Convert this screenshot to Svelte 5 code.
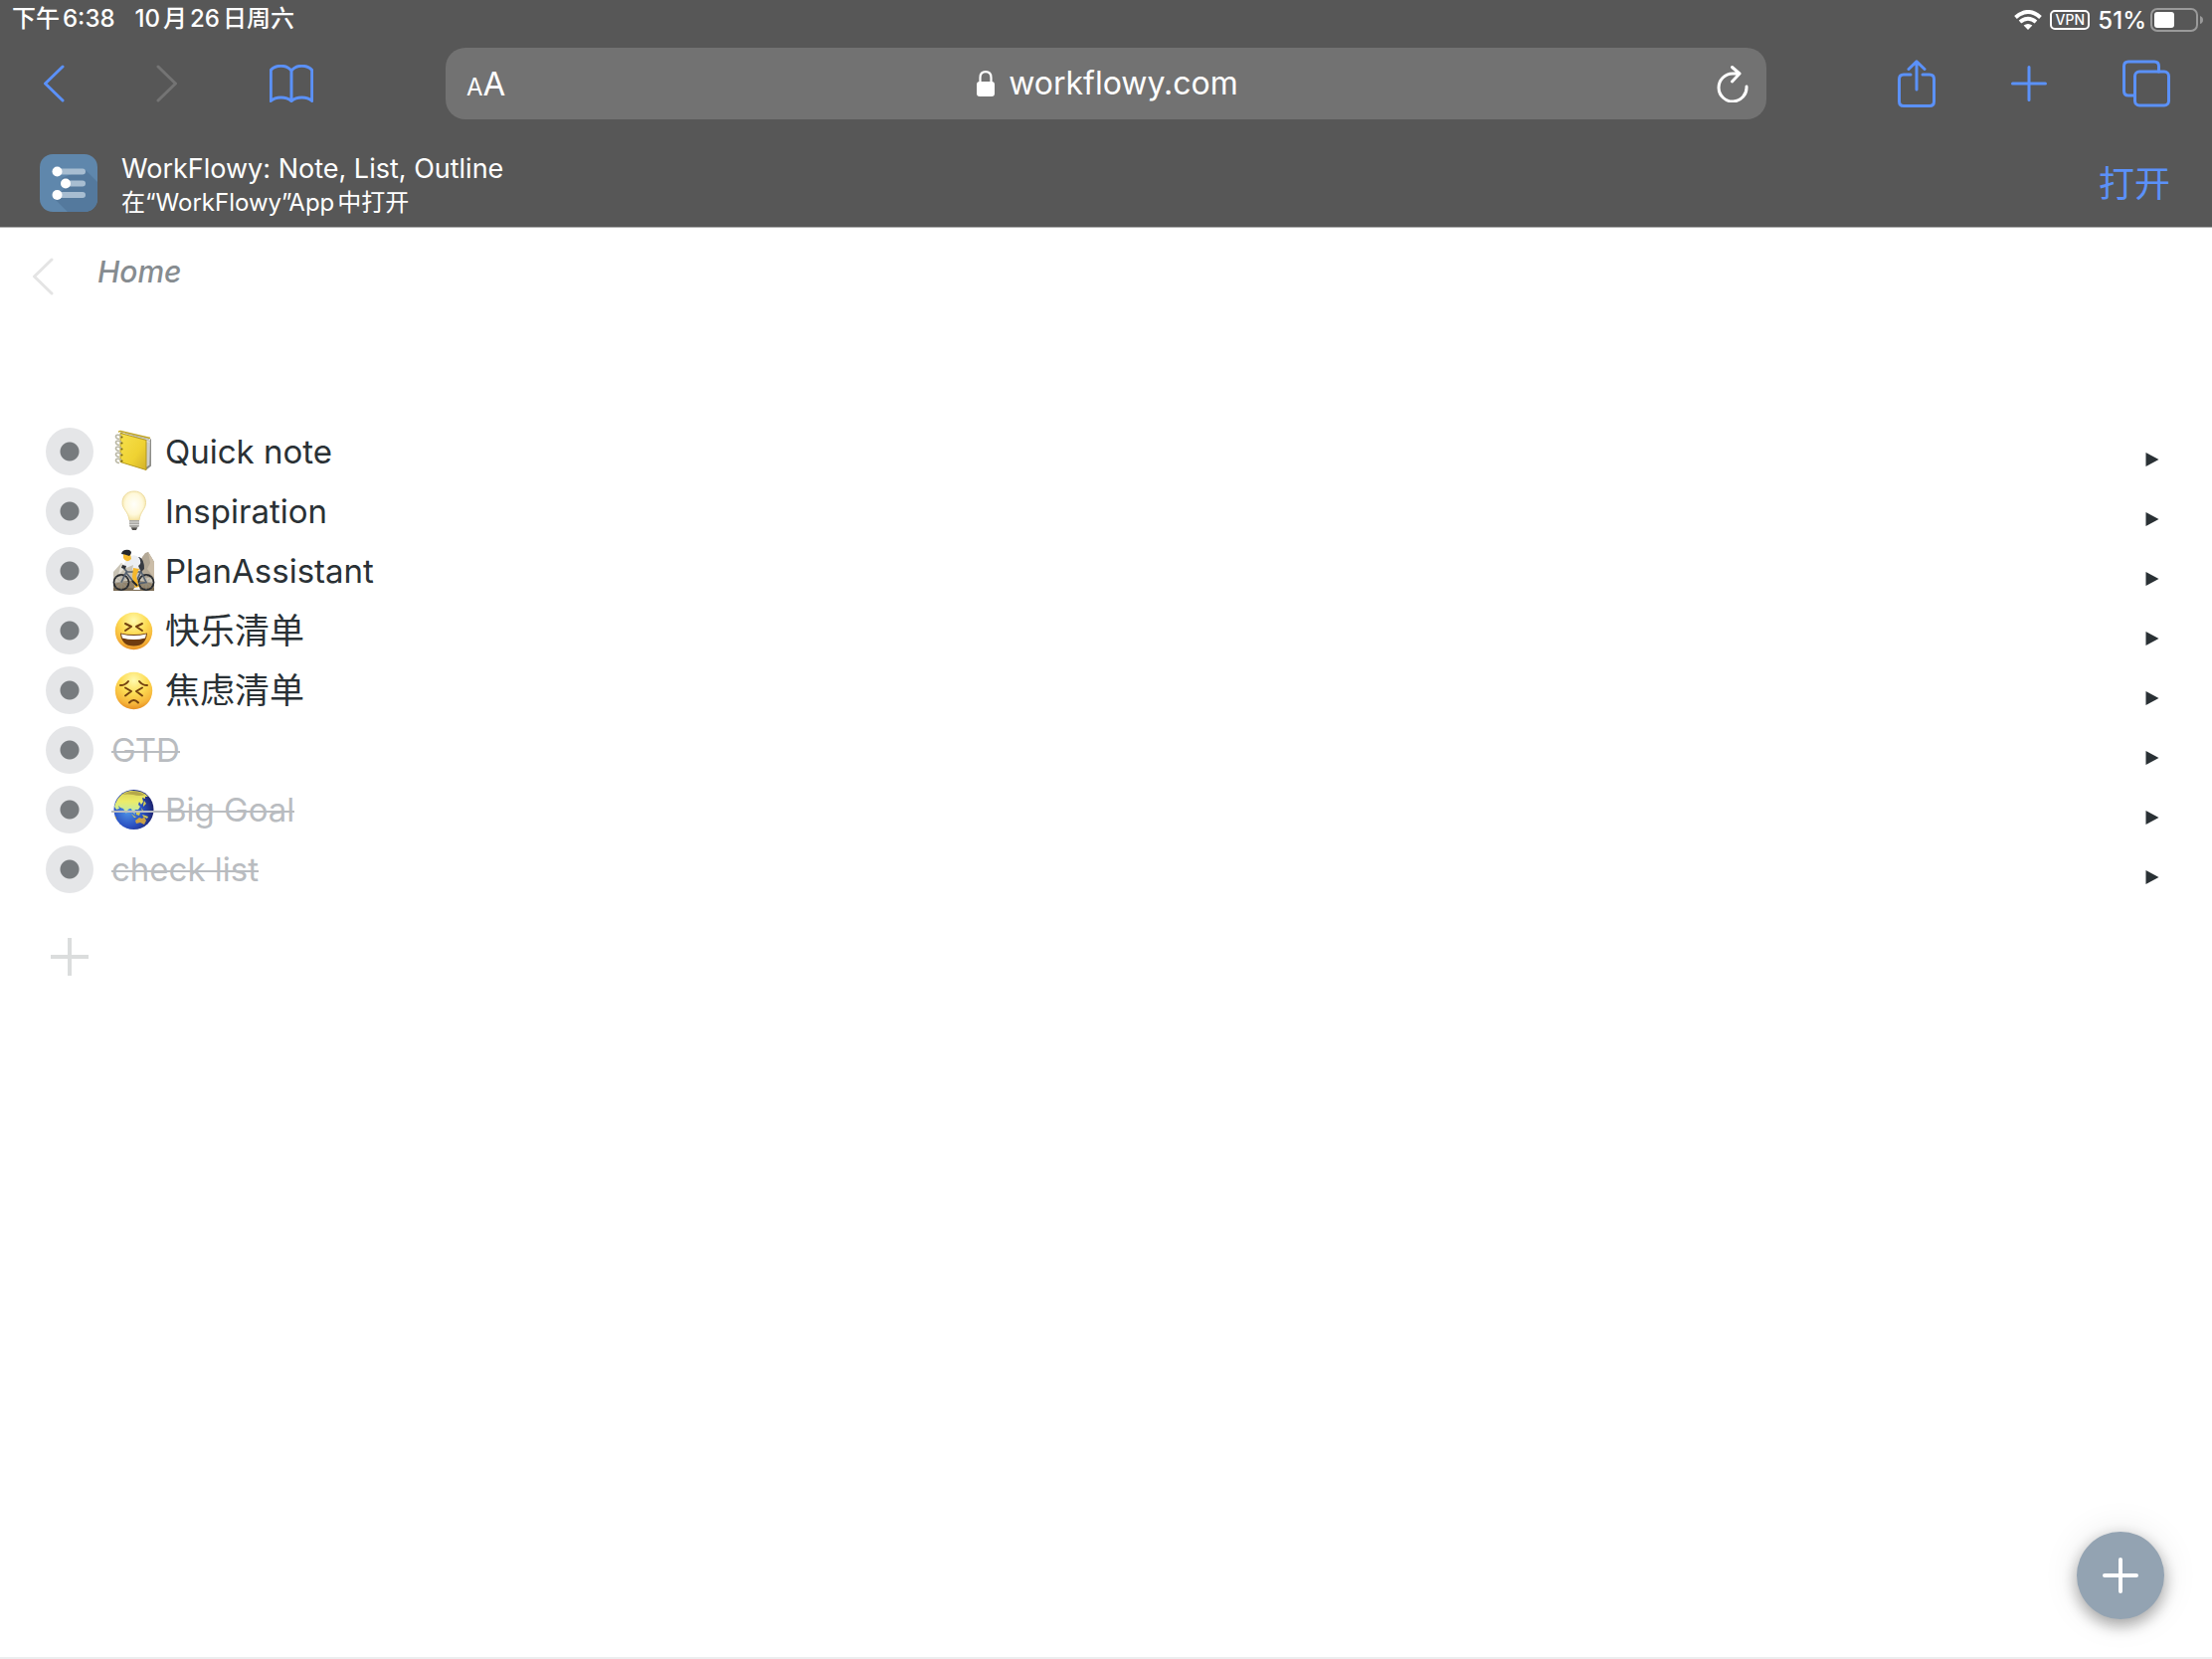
<script>
  const items = [
    { icon: 'notebook', text: 'Quick note' },
    { icon: 'bulb', text: 'Inspiration' },
    { icon: 'cyclist', text: 'PlanAssistant' },
    { icon: 'laugh', text: '快乐清单', lang: 'zh' },
    { icon: 'worried', text: '焦虑清单', lang: 'zh' },
    { icon: null, text: 'GTD', done: true },
    { icon: 'globe', text: 'Big Goal', done: true },
    { icon: null, text: 'check list', done: true }
  ];
  let address = $state('workflowy.com');
</script>

<svelte:head><title>WorkFlowy</title></svelte:head>

{#snippet emoji(name)}
  <svg class="emoji" viewBox="0 0 46 46" aria-hidden="true">
    {#if name === 'notebook'}
      <g transform="translate(2 .5)">
        <path d="M7 3 L38 10 V37 L33 41 L7 32 Z" fill="#8d8d88" />
        <path d="M8 2 L37 9 L36 36 L33 38 Z" fill="#e9e9e4" />
        <path d="M12 4 L36 10 M20 7 L37 12 M34 13 V37 M36 13 V36" stroke="#b5b5b0" stroke-width="1" />
        <path d="M7 4 L33 11 V41 L7 33 Z" fill="url(#cover)" stroke="#b59a20" stroke-width="1" />
        <path d="M6 3 Q5 2 7 2 L37 9" fill="none" stroke="#c2a624" stroke-width="1.5" />
        <g fill="none" stroke="#b9b7a4" stroke-width="1.6">
          <path d="M8 7 C1 3 1 10 6 10" /><path d="M8 13 C1 9 1 16 6 16" />
          <path d="M8 19 C1 15 1 22 6 22" /><path d="M8 25 C1 21 1 28 6 28" />
          <path d="M8 31 C1 27 1 34 6 34" />
        </g>
        <g fill="#70601c">
          <circle cx="8.500" cy="8" r="1" /><circle cx="8.500" cy="14" r="1" /><circle cx="8.500" cy="20" r="1" />
          <circle cx="8.500" cy="26" r="1" /><circle cx="8.500" cy="32" r="1" />
        </g>
      </g>
    {:else if name === 'bulb'}
      <path d="M23 3 C15.500 3 11 8 11 14.500 C11 21 17 23 18 32 H28 C29 23 34.500 21 34.500 14.500 C34.500 8 30 3 23 3 Z" fill="url(#glass)" stroke="#eedda0" stroke-width="1" />
      <path d="M18 32 H28 V37 Q28 39 26 39.500 L25 41.500 H21 L20 39.500 Q18 39 18 37 Z" fill="#aaa9a5" />
      <path d="M18 34 H28 M18 36.500 H28" stroke="#dad9d6" stroke-width="1.2" />
      <path d="M20 39.500 H26 L25 42 H21 Z" fill="#54524f" />
    {:else if name === 'cyclist'}
      <path d="M2 24 L10 15 L15 19 L22 14 L29 17 L34 6 L37 4 L43 14 V43 H2 Z" fill="#c9c3b5" />
      <path d="M31 9 L34 5 L37 4 L43 14 V30 H34 L28 18 Z" fill="#b3a896" />
      <path d="M37 4 L39 15 L36 21 L43 30 V14 Z" fill="#cbbda8" />
      <path d="M10 15 L7 27 L15 19 Z" fill="#e6e1d7" />
      <path d="M2 36 Q22 29 43 36 V43 H2 Z" fill="#91836c" />
      <rect x="2" y="40" width="41" height="3" fill="#7c6d56" />
      <g fill="none" stroke="#272a2f" stroke-width="1.8">
        <circle cx="10" cy="34.500" r="7.500" /><circle cx="35" cy="34.500" r="7.500" />
      </g>
      <path d="M10 27 V42 M3 34.500 H17 M5 29.500 L15 39.500 M15 29.500 L5 39.500 M35 27 V42 M28 34.500 H42 M30 29.500 L40 39.500 M40 29.500 L30 39.500" stroke="#9c9a94" stroke-width=".6" />
      <path d="M10 34.500 L15 24 L30 24 L35 34.500 L24 36 L15 25 M24 36 L30 23 M12 20 L16 24" fill="none" stroke="#54606f" stroke-width="1.700" />
      <path d="M23 10 L28 9 Q33 11 33 21 L30 24 L26 16 Z" fill="#383b42" />
      <path d="M17 9 Q24 5 28 10 Q31 15 27 18 L28 23 L21 22 L22 17 L15 20 L12 17 Z" fill="#eceef2" />
      <path d="M11 17 L15 18 L14 21 L10 20 Z" fill="#2b2e33" />
      <path d="M22 20 L28 21 L25 28 L28 40 L24 41 L21 29 Z" fill="#f5b72b" />
      <path d="M23 40 L28 39 L29 42 H22 Z" fill="#f5f5f5" />
      <path d="M12 6 H19 L20 11 Q15 16 12 10 Z" fill="#f6bb30" />
      <path d="M10 6 Q11 1 18 2 Q22 4 18 8 Q13 6 10 6 Z" fill="#24272c" />
      <path d="M21 33 L26 38" stroke="#25282d" stroke-width="2" />
    {:else if name === 'laugh'}
      <circle cx="22.500" cy="23.500" r="18.700" fill="url(#face)" />
      <path d="M14 16 L20 19 L14 23 M31 16 L25 19 L31 23" class="feature" />
      <path d="M9 25.500 Q22.500 28.500 36 25.500 Q35 38.500 22.500 38.500 Q10 38.500 9 25.500 Z" fill="#6f3c10" />
      <path d="M10 26.500 Q22.500 29.500 35 26.500 L34 30.500 Q22.500 33.500 11 30.500 Z" fill="#fff" />
    {:else if name === 'worried'}
      <circle cx="22.500" cy="23.500" r="18.700" fill="url(#face)" />
      <path d="M14 20.500 L20 24 L14 28.500 M31 20.500 L25 24 L31 28.500 M9 18 Q14 18 17 14 M36 18 Q31 18 28 14 M18 35.500 Q22.500 30.500 27 35.500" class="feature" />
    {:else if name === 'globe'}
      <circle cx="22.500" cy="23" r="20" fill="url(#sea)" />
      <path d="M4 17 Q8 6 19 4 Q31 3 37 10 L34 10 L34 12 L31 11 L32 15 L30 18 L28 15 L27 18 L29 20 L27 23 L24 23 L23 25 L24 28 L21 25 L20 22 L18 22 L16 24 L15 27 L12 22 L9 21 L7 19 L8 22 L5 23 L3 20 Z" fill="url(#land)" />
      <path d="M11 8 Q22 1 34 8 Q28 10 22 8 Q16 7 11 8 Z" fill="#b5a84a" />
      <path d="M20 27 L25 31 L23 31 Z M25 26 L29 26 L28 29 L25 28 Z M31 28 L37 30 L36 32 L32 30 Z M30 21 L32 24 L31 25 Z M33 14 L35 17 L32 20 L32 18 Z" fill="#d3cc55" />
      <path d="M24 34 L28 31 L31 32 L33 30 L35 34 L33 38 L29 36 L25 37 Z" fill="#caa144" />
      <path d="M3 29 L5 31 L5 33 Z" fill="#cfb147" />
    {/if}
  </svg>
{/snippet}

<!-- shared gradients for the pictograms -->
<svg class="defs" width="0" height="0" aria-hidden="true">
  <defs>
    <linearGradient id="cover" x1="0" y1="0" x2="1" y2="1"><stop offset="0" stop-color="#f6e04d" /><stop offset=".6" stop-color="#efd232" /><stop offset="1" stop-color="#d3b12a" /></linearGradient>
    <radialGradient id="glass" cx=".5" cy=".45" r=".6"><stop offset="0" stop-color="#fffffa" /><stop offset=".6" stop-color="#fff9dc" /><stop offset="1" stop-color="#f3e09a" /></radialGradient>
    <radialGradient id="face" cx=".5" cy=".22" r=".8"><stop offset="0" stop-color="#fffab0" /><stop offset=".45" stop-color="#fddc54" /><stop offset=".8" stop-color="#f6b53a" /><stop offset="1" stop-color="#e38a20" /></radialGradient>
    <radialGradient id="sea" cx=".35" cy=".55" r=".65"><stop offset="0" stop-color="#4f93e6" /><stop offset=".6" stop-color="#2a4fc0" /><stop offset="1" stop-color="#1d2470" /></radialGradient>
    <linearGradient id="land" x1="0" y1="0" x2="0" y2="1"><stop offset="0" stop-color="#d8d058" /><stop offset=".45" stop-color="#ecec68" /><stop offset="1" stop-color="#b4e8b8" /></linearGradient>
    <clipPath id="tile"><rect width="58" height="58" rx="13" /></clipPath>
  </defs>
</svg>

<div class="page">
  <header>
    <div class="status">
      <div class="group clock"><span>下午6:38</span><span>10月26日周六</span></div>
      <div class="group">
        <svg width="28" height="20" viewBox="0 0 28 20" role="img" aria-label="Wi-Fi">
          <path d="M14 20 L9.600 15.600 Q14 12.400 18.400 15.600 Z" fill="#fff" />
          <path d="M6 12 Q14 5.500 22 12" class="wave" /><path d="M1.500 7.500 Q14 -3.500 26.500 7.500" class="wave" />
        </svg>
        <span class="vpn">VPN</span>
        <span class="percent">51%</span>
        <svg width="54" height="24" viewBox="0 0 54 24" role="img" aria-label="Battery 51%">
          <rect x="1" y="1" width="46" height="22" rx="6" fill="none" stroke="#9a9a9a" stroke-width="2" />
          <rect x="4" y="4" width="20" height="16" rx="3" fill="#fff" />
          <path d="M50 8 Q53 9 53 12 Q53 15 50 16 Z" fill="#9a9a9a" />
        </svg>
      </div>
    </div>

    <div class="toolbar">
      <nav class="left">
        <button class="tool" aria-label="Back"><svg width="22" height="38" viewBox="0 0 22 38"><path d="M20 2 L2.500 19 L20 36" /></svg></button>
        <button class="tool forward" aria-label="Forward" disabled><svg width="22" height="38" viewBox="0 0 22 38"><path d="M2 2 L19.500 19 L2 36" /></svg></button>
        <button class="tool book" aria-label="Bookmarks"><svg width="44" height="38" viewBox="0 0 44 38"><path d="M22 6 Q18 1.300 11.500 1.300 Q5 1.300 1.300 5.500 V36.500 Q5 33 11.500 33 Q18 33 22 36.500 Q26 33 32.500 33 Q39 33 42.700 36.500 V5.500 Q39 1.300 32.500 1.300 Q26 1.300 22 6 V36" /></svg></button>
      </nav>
      <div class="field">
        <button class="reader" aria-label="Page settings"><span class="small">A</span>A</button>
        <label class="address">
          <svg width="18" height="26" viewBox="0 0 18 26" aria-hidden="true"><rect y="11" width="18" height="15" rx="3" fill="#fff" /><path d="M3.500 12 V7 Q3.500 1.200 9 1.200 Q14.500 1.200 14.500 7 V12" fill="none" stroke="#fff" stroke-width="2.200" /></svg>
          <input type="text" aria-label="Address" bind:value={address} />
        </label>
        <button class="reload" aria-label="Reload"><svg width="32" height="38" viewBox="0 0 32 38"><path d="M22 9 H16 A14 14 0 1 0 30 22 M15.500 2.500 L23 9 L15.500 17" /></svg></button>
      </div>
      <nav class="right">
        <button class="tool" aria-label="Share"><svg width="38" height="48" viewBox="0 0 38 48"><path d="M13 15 H6 Q1.500 15 1.500 19.500 V42 Q1.500 46.500 6 46.500 H32 Q36.500 46.500 36.500 42 V19.500 Q36.500 15 32 15 H25 M19 30 V2 M11 9.500 L19 1.800 L27 9.500" /></svg></button>
        <button class="tool" aria-label="New tab"><svg width="36" height="36" viewBox="0 0 36 36"><path d="M18 1.500 V34.500 M1.500 18 H34.500" /></svg></button>
        <button class="tool" aria-label="Tabs"><svg width="48" height="48" viewBox="0 0 48 48"><rect x="12.500" y="12" width="34" height="34" rx="4.500" /><path d="M12 36 H6 Q1.500 36 1.500 31.500 V6.500 Q1.500 2 6 2 H32 Q36.500 2 36.500 6.500 V12" /></svg></button>
      </nav>
    </div>

    <div class="banner">
      <svg class="app" viewBox="0 0 58 58" aria-hidden="true">
        <g clip-path="url(#tile)">
          <rect width="58" height="58" fill="#5f87ac" />
          <path d="M45 15 L58 28 V58 H28 L14 44 L28 32 L22 24 Z" fill="#54799d" />
        </g>
        <g stroke="#a7bdd1" stroke-width="6" stroke-linecap="round"><path d="M18 17.500 H43 M26 29.500 H43 M18 41 H43" /></g>
        <g fill="#fff"><circle cx="17.500" cy="17.500" r="5" /><circle cx="26" cy="29.500" r="5" /><circle cx="17.500" cy="41" r="5" /></g>
      </svg>
      <div class="about"><strong>WorkFlowy: Note, List, Outline</strong><span>在“WorkFlowy”App中打开</span></div>
      <a class="open" href="#open">打开</a>
    </div>
  </header>

  <main>
    <nav class="crumbs">
      <button class="up" aria-label="Up one level"><svg width="22" height="38" viewBox="0 0 22 38"><path d="M20 2 L2.500 19 L20 36" /></svg></button>
      <a href="#home">Home</a>
    </nav>
    <ul>
      {#each items as item}
        <li class:done={item.done}>
          <button class="bullet" aria-label={'Zoom in on ' + item.text}></button>
          <div class="name">{#if item.icon}{@render emoji(item.icon)}{/if}<span lang={item.lang ?? 'en'}>{item.text}</span></div>
          <button class="expand" aria-label={'Expand ' + item.text}><svg width="14" height="14" viewBox="0 0 14 14"><path d="M.5 0 L13.500 7 L.5 14 Z" fill="#2a3135" /></svg></button>
        </li>
      {/each}
    </ul>
    <button class="add" aria-label="Add item"><svg width="38" height="38" viewBox="0 0 38 38"><path d="M19 0 V38 M0 19 H38" stroke="#dbdddd" stroke-width="4" /></svg></button>
  </main>
  <button class="fab" aria-label="New item"><svg width="36" height="36" viewBox="0 0 36 36"><path d="M18 2 V34 M2 18 H34" stroke="#fff" stroke-width="4" stroke-linecap="round" /></svg></button>
</div>

<style>
  :global(body) { background: #fff; }
  .defs { position: absolute; }
  .page {
    box-sizing: border-box;
    min-height: 100vh;
    border-bottom: 2px solid #eceeef;
    font-family: Inter, "Noto Sans CJK SC", sans-serif;
    color: #2a3135;
    text-autospace: normal;
  }
  svg { display: block; flex: none; }
  button { display: block; padding: 0; border: 0; background: none; color: inherit; font: inherit; cursor: pointer; }
  a { text-decoration: none; }

  header { background: #575757; color: #fff; border-bottom: 1px solid #a9a9a9; }
  .status { display: flex; justify-content: space-between; height: 40px; padding: 0 8px 0 12px; font-size: 24px; font-weight: 500; }
  .group { display: flex; align-items: center; gap: 8px; }
  .clock { gap: 20px; line-height: 32px; padding-bottom: 2px; }
  .wave { fill: none; stroke: #fff; stroke-width: 4; }
  .vpn { box-sizing: border-box; width: 40px; height: 20px; border: 2px solid #fff; border-radius: 5px; font-size: 14px; line-height: 16px; text-align: center; }
  .percent { margin-right: -4px; }

  .toolbar { display: grid; grid-template-columns: 448px 1fr 448px; align-items: center; padding-top: 8px; }
  .tool svg { fill: none; stroke: #5b91f9; stroke-width: 3; stroke-linecap: round; stroke-linejoin: round; }
  .left { display: flex; align-items: center; gap: 92px; padding-left: 43px; }
  .forward svg { stroke: #747474; }
  .right { display: flex; align-items: center; justify-content: flex-end; gap: 76px; padding-right: 42px; }
  .field { display: grid; grid-template-columns: 1fr auto 1fr; align-items: center; height: 72px; padding: 0 18px 0 21px; border-radius: 20px; background: #727272; }
  .reader { justify-self: start; padding-top: 4px; font-size: 33px; line-height: 40px; }
  .small { font-size: 24px; }
  .address { display: flex; align-items: center; gap: 14px; font-size: 32px; }
  .address input { field-sizing: content; padding: 0; border: 0; background: none; color: inherit; font: inherit; line-height: 40px; outline: 0; }
  .reload { justify-self: end; }
  .reload svg { fill: none; stroke: #fff; stroke-width: 3; stroke-linecap: round; stroke-linejoin: round; }

  .banner { display: flex; align-items: center; height: 88px; padding: 20px 42px 0 40px; }
  .app { width: 58px; height: 58px; }
  .about { display: flex; flex-direction: column; flex: 1; margin-left: 24px; padding-top: 4px; font-size: 24px; line-height: 32px; }
  .about strong { font-size: 27px; line-height: 36px; font-weight: 400; }
  .open { padding-top: 2px; color: #5b91f9; font-size: 36px; line-height: 48px; }

  .crumbs { display: flex; align-items: flex-start; gap: 44px; height: 171px; padding: 24px 32px 0; }
  .up { padding-top: 6px; }
  .up svg { fill: none; stroke: #e4e4e4; stroke-width: 3; stroke-linecap: round; stroke-linejoin: round; }
  .crumbs a { color: #868c90; font-size: 30px; line-height: 40px; font-style: italic; font-weight: 500; }

  ul { margin: 0; padding: 0 53px 0 46px; list-style: none; }
  li { display: flex; align-items: center; height: 60px; font-size: 33px; line-height: 48px; }
  .bullet { width: 48px; height: 48px; border-radius: 50%; background: radial-gradient(circle, #777b7e 9px, #e5e6e8 10px); }
  .name { position: relative; display: flex; align-items: center; gap: 8px; margin-left: 18px; }
  .name [lang="zh"] { font-size: 35px; }
  .done .name { color: #b9bcc0; }
  .done .name::after { content: ""; position: absolute; left: 0; right: 0; top: calc(50% + 1px); height: 2px; background: #b9bcc0; }
  .emoji { width: 46px; height: 46px; }
  .emoji .feature { fill: none; stroke: #74420f; stroke-width: 2; stroke-linecap: round; stroke-linejoin: round; }
  .expand { margin-left: auto; padding-top: 16px; }
  .add { margin: 39px 0 40px 51px; }

  .fab { position: fixed; right: 48px; bottom: 40px; display: flex; align-items: center; justify-content: center; width: 88px; height: 88px; border-radius: 50%; background: #93a3b2; box-shadow: 0 6px 16px rgba(0, 0, 0, .34), 0 0 36px rgba(0, 0, 0, .1); }
</style>
